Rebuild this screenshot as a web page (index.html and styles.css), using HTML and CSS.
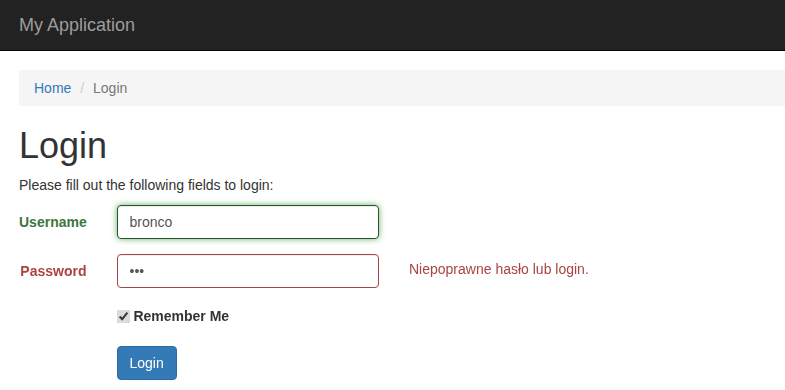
FILE: index.html
```html
<!DOCTYPE html>
<html lang="pl">
<head>
    <meta charset="UTF-8">
    <meta name="viewport" content="width=device-width, initial-scale=1.0">
    <title>Login</title>
    <link rel="stylesheet" href="styles.css">
</head>
<body>
    <div class="wrap">
        <nav class="navbar">
            <div class="container">
                <a class="navbar-brand" href="#">My Application</a>
            </div>
        </nav>

        <div class="container page">
            <ul class="breadcrumb">
                <li><a href="#">Home</a></li>
                <li class="active">Login</li>
            </ul>

            <div class="site-login">
                <h1>Login</h1>
                <p>Please fill out the following fields to login:</p>

                <form id="login-form" class="form-horizontal">
                    <div class="form-group has-success">
                        <label class="control-label" for="loginform-username">Username</label>
                        <div class="field">
                            <input type="text" id="loginform-username" class="form-control" value="bronco" autofocus>
                        </div>
                        <div class="hint"><div class="help-block"></div></div>
                    </div>

                    <div class="form-group has-error">
                        <label class="control-label" for="loginform-password">Password</label>
                        <div class="field">
                            <input type="password" id="loginform-password" class="form-control" value="abc">
                        </div>
                        <div class="hint"><div class="help-block">Niepoprawne hasło lub login.</div></div>
                    </div>

                    <div class="form-group remember">
                        <div class="field offset">
                            <input type="checkbox" id="loginform-rememberme" checked>
                            <label for="loginform-rememberme">Remember Me</label>
                        </div>
                    </div>

                    <div class="form-group">
                        <div class="field offset">
                            <button type="submit" class="btn btn-primary">Login</button>
                        </div>
                    </div>
                </form>
            </div>
        </div>
    </div>
</body>
</html>
```

FILE: styles.css
```css
* {
    box-sizing: border-box;
}

html, body {
    margin: 0;
    overflow: hidden;
}

body {
    font-family: "Liberation Sans", Helvetica, Arial, sans-serif;
    font-size: 14px;
    line-height: 20px;
    color: #333;
    background-color: #fff;
}

a {
    color: #337ab7;
    text-decoration: none;
}

.container {
    width: 1170px;
    margin-left: 4px;
    padding: 0 15px;
}

/* navbar */

.navbar {
    background-color: #222;
    border-bottom: 1px solid #080808;
    min-height: 50px;
    width: 1200px;
}

.navbar-brand {
    display: block;
    height: 50px;
    padding: 15px 0;
    font-size: 18px;
    line-height: 20px;
    color: #9d9d9d;
}

.page {
    padding-top: 19px;
}

/* breadcrumb */

.breadcrumb {
    list-style: none;
    margin: 0 0 20px;
    padding: 8px 15px;
    background-color: #f5f5f5;
    border-radius: 4px;
}

.breadcrumb li {
    display: inline-block;
}

.breadcrumb li + li::before {
    content: "/\00a0";
    padding: 0 5px;
    color: #ccc;
}

.breadcrumb .active {
    color: #777;
}

h1 {
    font-size: 36px;
    font-weight: 500;
    line-height: 39px;
    margin: 20px 0 10px;
}

p {
    margin: 0 0 10px;
}

/* form */

.form-group {
    display: grid;
    grid-template-columns: 97.5px 292.5px 780px;
    margin: 0 -15px 15px;
    align-items: start;
}

.form-group.remember {
    padding-top: 2px;
}

.control-label {
    padding: 7px 15px 0;
    text-align: right;
    font-weight: bold;
    white-space: nowrap;
}

.field {
    padding: 0 15px;
}

.field.offset {
    grid-column: 2 / 4;
}

.hint {
    padding: 0 15px;
}

.help-block {
    margin: 5px 0 10px;
}

.form-control {
    display: block;
    width: 100%;
    height: 34px;
    padding: 6px 12px;
    font-family: inherit;
    font-size: 14px;
    line-height: 20px;
    color: #555;
    background-color: #fff;
    border: 1px solid #ccc;
    border-radius: 4px;
    box-shadow: inset 0 1px 1px rgba(0, 0, 0, 0.075);
}

.form-control:focus {
    outline: 0;
}

.has-success .control-label {
    color: #3c763d;
}

.has-success .form-control {
    border-color: #2b542c;
    box-shadow: inset 0 1px 1px rgba(0, 0, 0, 0.075), 0 0 6px #67b168;
}

.has-error .control-label,
.has-error .help-block {
    color: #a94442;
}

.has-error .form-control {
    border-color: #a94442;
}

#loginform-rememberme {
    width: 13px;
    height: 13px;
    margin: 4px 0 0;
    vertical-align: top;
    accent-color: #dcdcdc;
}

.field.offset label {
    display: inline-block;
    font-weight: bold;
    margin-bottom: 5px;
}

.btn {
    display: inline-block;
    padding: 6px 12px;
    font-family: inherit;
    font-size: 14px;
    line-height: 20px;
    border: 1px solid transparent;
    border-radius: 4px;
    cursor: pointer;
}

.btn-primary {
    color: #fff;
    background-color: #337ab7;
    border-color: #2e6da4;
}
```
